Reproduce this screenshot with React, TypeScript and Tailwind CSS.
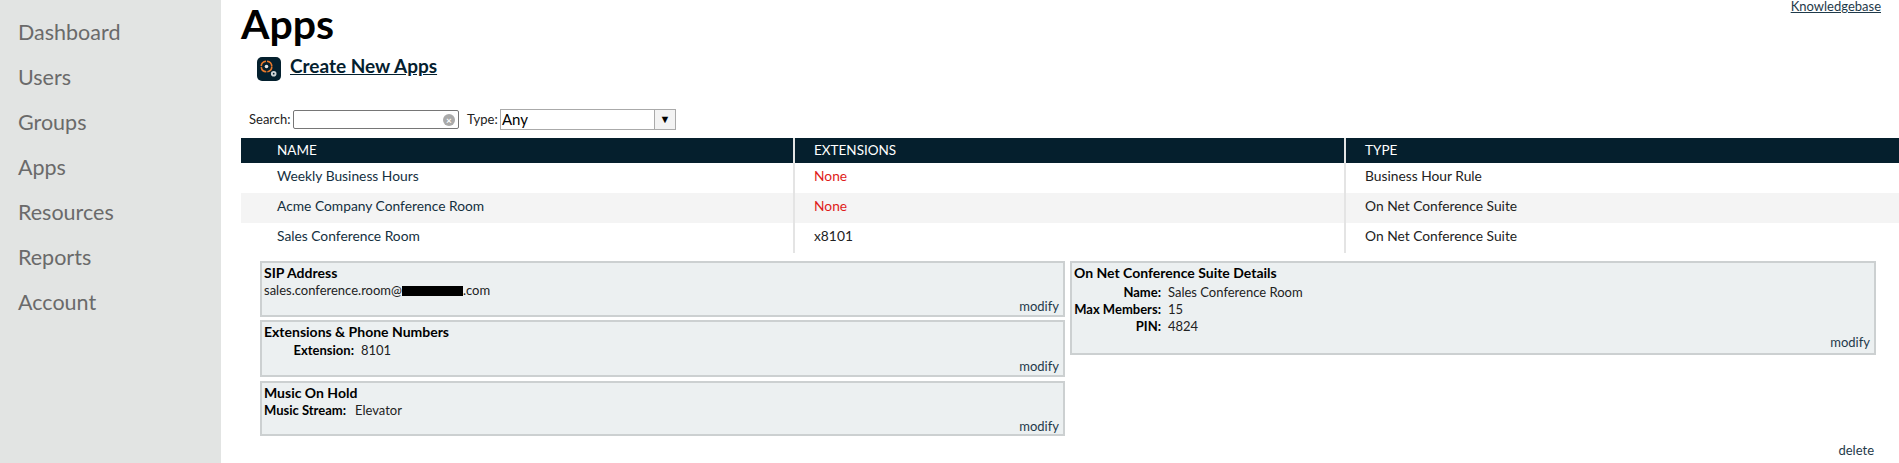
const navItems = ['Dashboard', 'Users', 'Groups', 'Apps', 'Resources', 'Reports', 'Account']

const rows = [
  { name: 'Weekly Business Hours', ext: 'None', type: 'Business Hour Rule', bg: 'bg-white' },
  { name: 'Acme Company Conference Room', ext: 'None', type: 'On Net Conference Suite', bg: 'bg-[#f4f4f4]' },
  { name: 'Sales Conference Room', ext: 'x8101', type: 'On Net Conference Suite', bg: 'bg-white' },
]

function AppIcon() {
  return (
    <svg width="24" height="24" viewBox="0 0 24 24" className="shrink-0">
      <rect x="0" y="0" width="24" height="24" rx="5" fill="#04202e" />
      <circle cx="9.5" cy="9.5" r="5.3" fill="none" stroke="#e8792c" strokeWidth="1.6" strokeDasharray="7.2 1.1" />
      <circle cx="9.5" cy="9.5" r="1.8" fill="#e6e6e6" />
      <circle cx="16.7" cy="16.7" r="2.8" fill="#cfd4d6" />
      <circle cx="16.7" cy="16.7" r="0.9" fill="#04202e" />
    </svg>
  )
}

function Modify() {
  return <div className="text-right text-[13px] leading-[14px] text-[#1f3a4a]">modify</div>
}

function Box({ title, className, children }: { title: string; className: string; children: React.ReactNode }) {
  return (
    <div className={`flex flex-col border-2 border-[#ccd0d1] bg-[#ecf0f1] pl-[2px] pr-[4px] text-[13px] text-[#222] ${className}`}>
      <div className="mt-[1px] text-[14px] font-bold leading-[18px] text-black">{title}</div>
      <div className="flex-1">{children}</div>
      <div className="pb-[4px]">
        <Modify />
      </div>
    </div>
  )
}

function Field({ label, value, width }: { label: string; value: string; width: string }) {
  return (
    <div className="flex h-[17px] items-center">
      <span className={`${width} text-right font-bold text-black`}>{label}</span>
      <span className="ml-[7px]">{value}</span>
    </div>
  )
}

export default function App() {
  return (
    <div className="flex h-[463px] overflow-hidden bg-white font-['Lato','Liberation_Sans',sans-serif]">
      <nav className="flex w-[221px] shrink-0 flex-col bg-[#e2e4e3] pl-[18px] pt-[10px]">
        {navItems.map((item) => (
          <div key={item} className="h-[45px] text-[21.5px] leading-[45px] text-[#6a6a6a]">
            {item}
          </div>
        ))}
      </nav>

      <main className="min-w-0 flex-1 pl-[20px]">
        <div className="flex items-start justify-between pr-[18px]">
          <h1 className="text-[41px] font-bold leading-[48px] text-black">Apps</h1>
          <a className="text-[13px] leading-[12px] text-[#1f3a4a] underline">Knowledgebase</a>
        </div>

        <div className="ml-[16px] mt-[9px] flex h-[24px] items-center gap-[9px]">
          <AppIcon />
          <a className="mb-[7px] text-[19px] font-bold leading-[22px] text-[#04202e] underline">Create New Apps</a>
        </div>

        <div className="ml-[8px] mt-[28px] flex h-[21px] items-center text-[13px] text-[#222]">
          <span className="w-[44px]">Search:</span>
          <div className="flex h-[19px] w-[166px] items-center justify-end rounded-[2px] border border-[#767676] pr-[3px]">
            <span className="flex h-[12px] w-[12px] items-center justify-center rounded-full bg-[#aaa] text-[10px] font-bold leading-none text-white">
              ×
            </span>
          </div>
          <span className="ml-[8px] w-[33px]">Type:</span>
          <div className="flex h-[21px] w-[176px] items-center border border-[#aaa] pl-[1px] text-[15px] text-black">
            <span className="flex-1">Any</span>
            <span className="flex h-full w-[21px] items-center justify-center border-l border-[#aaa] bg-[#f3f3f3] text-[11px]">
              ▼
            </span>
          </div>
        </div>

        <div className="mt-[8px] grid h-[25px] grid-cols-[552px_551px_1fr] bg-[#051f2d] text-[13.5px] leading-[25px] text-white">
          <div className="pl-[36px]">NAME</div>
          <div className="border-l-2 border-[#e4e4e4] pl-[19px]">EXTENSIONS</div>
          <div className="border-l-2 border-[#e4e4e4] pl-[19px]">TYPE</div>
        </div>

        {rows.map((row) => (
          <div key={row.name} className={`grid h-[30px] grid-cols-[552px_551px_1fr] text-[13.8px] leading-[26px] ${row.bg}`}>
            <div className="pl-[36px] text-[#14303f]">{row.name}</div>
            <div className={`border-l-2 border-[#e4e4e4] pl-[19px] ${row.ext === 'None' ? 'text-[#e01b1b]' : 'text-[#222]'}`}>
              {row.ext}
            </div>
            <div className="border-l-2 border-[#e4e4e4] pl-[19px] text-[#222]">{row.type}</div>
          </div>
        ))}

        <div className="ml-[19px] mr-[23px] mt-[8px] flex gap-[5px]">
          <div className="flex w-[805px] shrink-0 flex-col">
            <Box title="SIP Address" className="h-[56px]">
              <div className="flex items-center leading-[17px]">
                sales.conference.room@
                <span className="inline-block h-[10px] w-[61px] bg-black" />
                .com
              </div>
            </Box>
            <Box title="Extensions & Phone Numbers" className="mt-[3px] h-[57px]">
              <div className="mt-[1px]">
                <Field label="Extension:" value="8101" width="w-[90px]" />
              </div>
            </Box>
            <Box title="Music On Hold" className="mt-[4px] h-[55px]">
              <div className="flex h-[17px] items-center">
                <span className="font-bold text-black">Music Stream:</span>
                <span className="ml-[9px]">Elevator</span>
              </div>
            </Box>
          </div>
          <Box title="On Net Conference Suite Details" className="h-[94px] flex-1">
            <div className="mt-[2px]">
              <Field label="Name:" value="Sales Conference Room" width="w-[87px]" />
              <Field label="Max Members:" value="15" width="w-[87px]" />
              <Field label="PIN:" value="4824" width="w-[87px]" />
            </div>
          </Box>
        </div>

        <div className="mr-[25px] mt-[7px] text-right text-[13px] leading-[14px] text-[#1f3a4a]">delete</div>
      </main>
    </div>
  )
}
